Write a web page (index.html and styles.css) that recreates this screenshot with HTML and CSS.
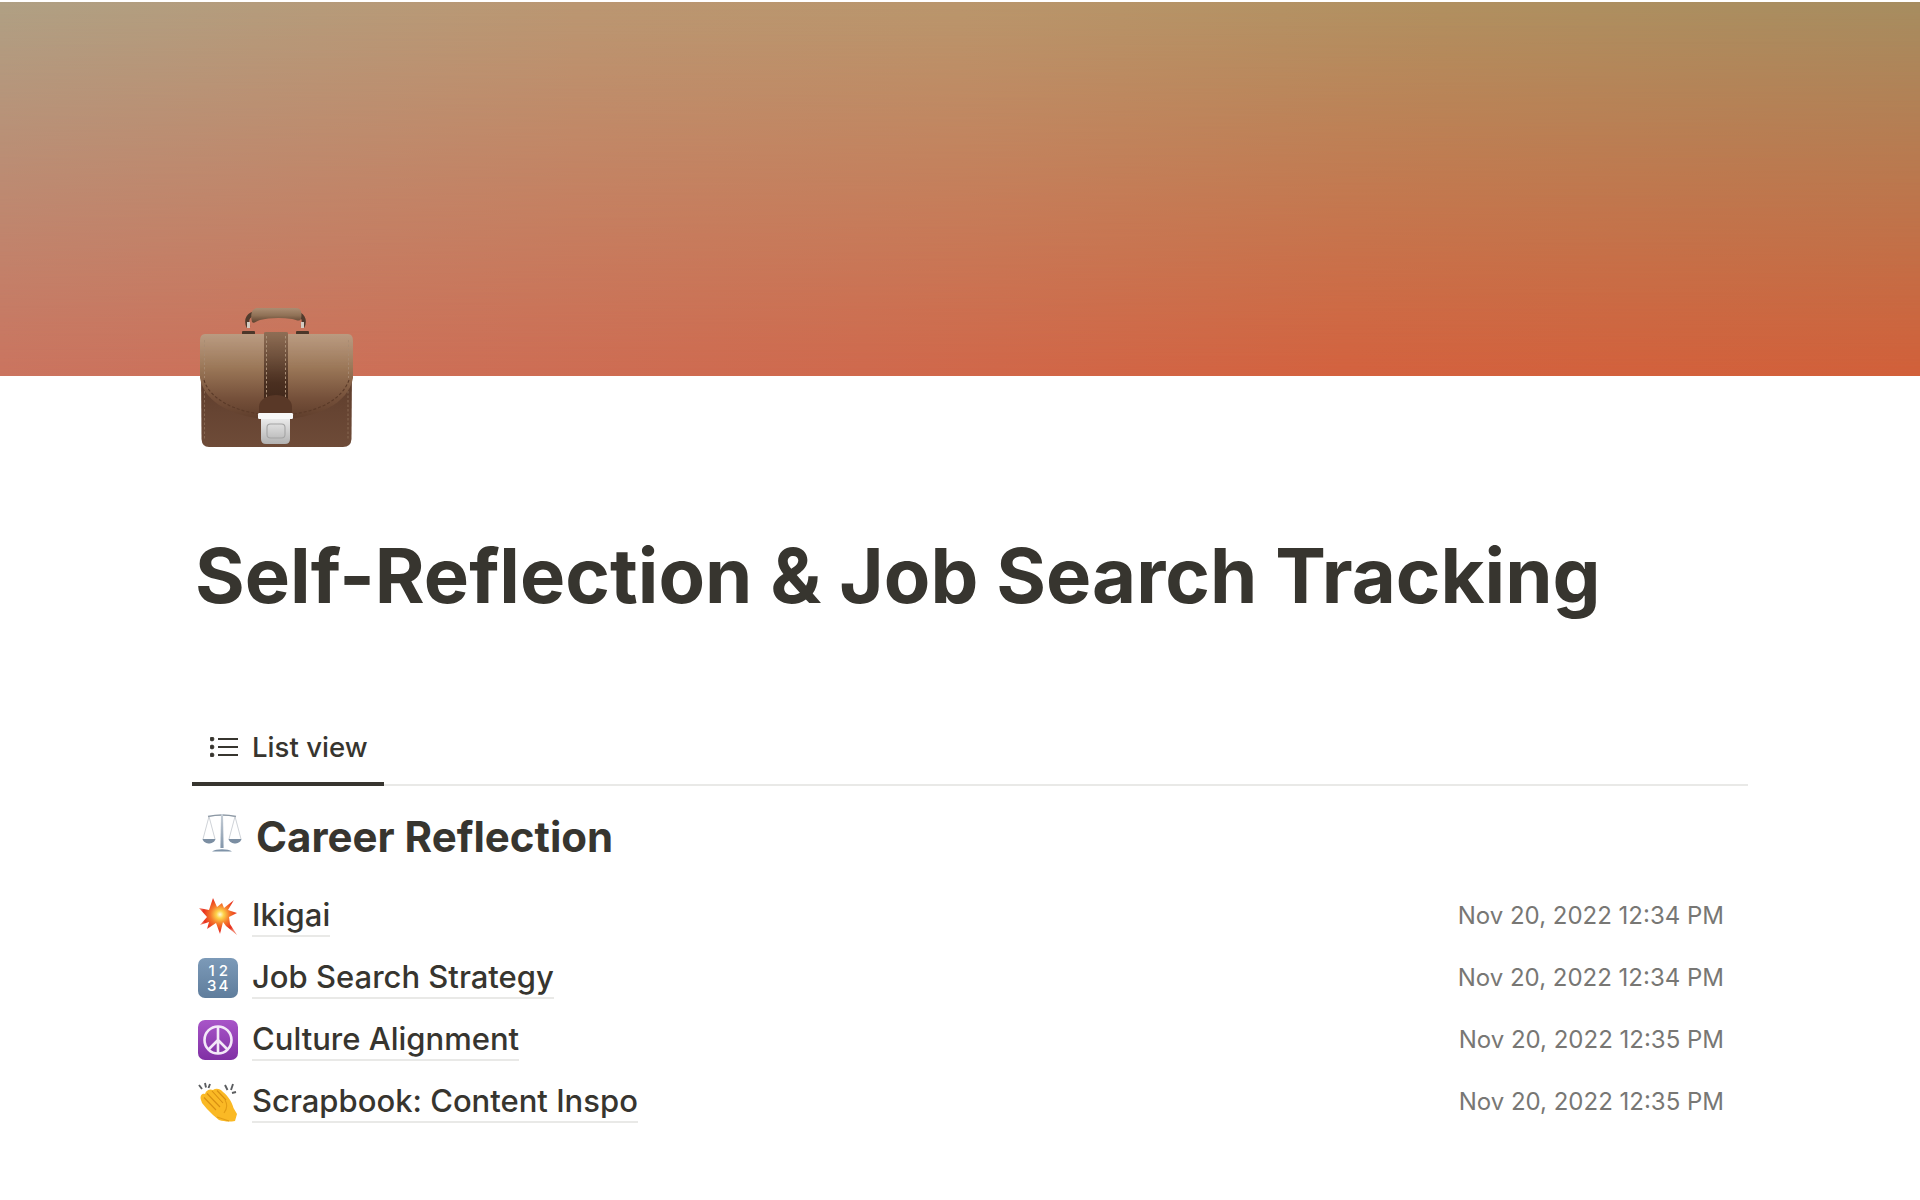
FILE: index.html
```html
<!DOCTYPE html>
<html lang="en">
<head>
<meta charset="utf-8">
<title>Self-Reflection &amp; Job Search Tracking</title>
<link rel="stylesheet" href="styles.css">
</head>
<body>
<div class="cover"></div>
<main class="page">
  <svg class="page-icon" viewBox="0 0 160 150" width="160" height="150" aria-hidden="true">
    <defs>
      <linearGradient id="flap" x1="0" y1="0" x2="0" y2="1"><stop offset="0" stop-color="#bb9b82"/><stop offset=".4" stop-color="#9a7657"/><stop offset=".75" stop-color="#75503a"/><stop offset="1" stop-color="#5e3d2b"/></linearGradient>
      <linearGradient id="base" x1="0" y1="0" x2="0" y2="1"><stop offset="0" stop-color="#5d3c2b"/><stop offset="1" stop-color="#6e4b38"/></linearGradient>
      <linearGradient id="strap" x1="0" y1="0" x2="0" y2="1"><stop offset="0" stop-color="#8a6850"/><stop offset=".7" stop-color="#4a2f20"/><stop offset="1" stop-color="#3f271a"/></linearGradient>
      <linearGradient id="handle" x1="0" y1="0" x2="0" y2="1"><stop offset="0" stop-color="#a98a70"/><stop offset=".5" stop-color="#8a6a50"/><stop offset="1" stop-color="#4f3222"/></linearGradient>
      <linearGradient id="metal" x1="0" y1="0" x2="0" y2="1"><stop offset="0" stop-color="#eeeeee"/><stop offset="1" stop-color="#b2b2b2"/></linearGradient>
    </defs>
    <path d="M52.5 27 C49 19 53 14 60 13 M106.5 27 C110 19 106 14 99 13" fill="none" stroke="#3f2a1f" stroke-width="4"/>
    <path d="M56 22 C54 14 56 8 62 8 H100 C106 8 106 14 105 19 C103 22 101 20 96 19 C84 17 72 18 64 20 C60 21 58 24 56 22 Z" fill="url(#handle)"/>
    <rect x="51" y="22" width="3" height="6" fill="#d8d4ce"/><rect x="105" y="22" width="3" height="6" fill="#d8d4ce"/>
    <rect x="46" y="31" width="13" height="3.5" rx="1" fill="#3f2a1f"/>
    <rect x="100" y="31" width="13" height="3.5" rx="1" fill="#3f2a1f"/>
    <path d="M5 70 H156 L155.5 139 Q155 147 147 147 H13 Q6 147 5.5 139 Z" fill="url(#base)"/>
    <path d="M152 82 V140 M8.5 82 V140" fill="none" stroke="#8a6b56" stroke-width=".9" stroke-dasharray="2.5 2"/>
    <path d="M9 34 H152 Q157 34 157 41 V78 C152 104 122 118 80 120 C38 118 9 104 4 78 V41 Q4 34 9 34 Z" fill="url(#flap)"/>
    <path d="M152.5 40 V78 M8.5 40 V78" fill="none" stroke="#a78a72" stroke-width=".9" stroke-dasharray="2.5 2"/>
    <path d="M8 80 C14 100 40 111 64 114 M153 80 C146 100 122 111 97 114" fill="none" stroke="#5a3a28" stroke-width="1.1" stroke-dasharray="3 2"/>
    <path d="M68 33 Q68 32 70 32 H90 Q92 32 92 33 V105 H68 Z" fill="url(#strap)"/>
    <path d="M70.5 36 V98 M89.5 36 V98" stroke="#a98e76" stroke-width="1" stroke-dasharray="2.5 2"/>
    <path d="M63 116 V107 C63 99 72 95 80 95 C88 95 96 99 96 107 V116 Z" fill="#593827"/>
    <path d="M65 117 H94 V139 Q94 144 89 144 H70 Q65 144 65 139 Z" fill="url(#metal)"/>
    <rect x="62" y="113" width="35" height="6" rx="1.2" fill="#f8f8f8"/>
    <rect x="71" y="124" width="18" height="14" rx="3.5" fill="none" stroke="#a4a4a4" stroke-width="1.1"/>
  </svg>
  <h1 class="title">Self-Reflection &amp; Job Search Tracking</h1>
  <nav class="tabs">
    <div class="tab">
      <svg class="tab-icon" viewBox="0 0 28 20" width="28" height="20" aria-hidden="true">
        <circle cx="2" cy="2" r="1.9"/><circle cx="2" cy="10" r="1.9"/><circle cx="2" cy="18" r="1.9"/>
        <path d="M8 2 H28 M8 10 H28 M8 18 H28" fill="none" stroke-width="2.1"/>
      </svg>
      <span>List view</span>
    </div>
  </nav>
  <h2 class="heading">
    <svg class="heading-icon" viewBox="0 0 40 40" width="40" height="40" aria-hidden="true">
      <defs><linearGradient id="steel" x1="0" y1="0" x2="0" y2="1"><stop offset="0" stop-color="#c8d0d8"/><stop offset="1" stop-color="#8396aa"/></linearGradient></defs>
      <path d="M6 3.5 Q20 .5 34 3.5" fill="none" stroke="#8c98a4" stroke-width="1.3"/>
      <path d="M7 3.5 L1 26 M7 3.5 L13 26 M33 3.5 L27 26 M33 3.5 L39 26" fill="none" stroke="#aeb6be" stroke-width=".6"/>
      <path d="M19 1 H21 L21.6 35 H18.4 Z" fill="url(#steel)"/>
      <path d="M.5 26 H13.5 C12.5 29.5 9 30.5 7 30.5 C5 30.5 1.5 29.5 .5 26 Z" fill="#7b8ea2"/>
      <path d="M26.5 26 H39.5 C38.5 29.5 35 30.5 33 30.5 C31 30.5 27.5 29.5 26.5 26 Z" fill="#7b8ea2"/>
      <path d="M10 38.5 C14 35.5 26 35.5 30 38.5 Z" fill="#7f93a8"/>
    </svg>
    <span>Career Reflection</span>
  </h2>
  <ul class="rows">
    <li class="row">
      <svg class="row-icon" viewBox="0 0 40 40" width="40" height="40" aria-hidden="true">
        <defs><radialGradient id="burst" gradientUnits="userSpaceOnUse" cx="22" cy="18.5" r="21"><stop offset="0" stop-color="#fffbe0"/><stop offset=".18" stop-color="#fdd34a"/><stop offset=".45" stop-color="#f57a2c"/><stop offset=".8" stop-color="#e8301f"/><stop offset="1" stop-color="#f2836e"/></radialGradient></defs>
        <path d="M15 2 L19 11 L24 7 L26 12 L36 4 L30 14 L39 17 L31 21 L32 28 L39 39 L28 30 L25 26 L22 38 L18 27 L9 33 L11 26 L2 29 L9 21 L1 12 L11 14 Z" fill="url(#burst)"/>
      </svg>
      <span class="row-title">Ikigai</span>
      <span class="row-date">Nov 20, 2022 12:34 PM</span>
    </li>
    <li class="row">
      <svg class="row-icon" viewBox="0 0 40 40" width="40" height="40" aria-hidden="true">
        <defs><linearGradient id="slate" x1="0" y1="0" x2="0" y2="1"><stop offset="0" stop-color="#7c9ab8"/><stop offset="1" stop-color="#5f7d9c"/></linearGradient></defs>
        <rect x="0" y="0" width="40" height="40" rx="7" fill="url(#slate)"/>
        <text class="num-text" x="13.7 25.3 13.7 25.3" y="18 18 33 33">1234</text>
      </svg>
      <span class="row-title">Job Search Strategy</span>
      <span class="row-date">Nov 20, 2022 12:34 PM</span>
    </li>
    <li class="row">
      <svg class="row-icon" viewBox="0 0 40 40" width="40" height="40" aria-hidden="true">
        <defs><linearGradient id="violet" x1="0" y1="0" x2="0" y2="1"><stop offset="0" stop-color="#a855c8"/><stop offset="1" stop-color="#8030a4"/></linearGradient></defs>
        <rect x="0" y="0" width="40" height="40" rx="7" fill="url(#violet)"/>
        <circle cx="20" cy="20" r="13.5" fill="none" stroke="#f3e8f8" stroke-width="2.6"/>
        <path d="M20 6.5 V33.5 M20 20 L10.5 29.5 M20 20 L29.5 29.5" fill="none" stroke="#f3e8f8" stroke-width="2.6"/>
      </svg>
      <span class="row-title">Culture Alignment</span>
      <span class="row-date">Nov 20, 2022 12:35 PM</span>
    </li>
    <li class="row">
      <svg class="row-icon" viewBox="0 0 40 40" width="40" height="40" aria-hidden="true">
        <path d="M3 18 C1.500 14 4 11 7 12 C8 8 12 6.500 15 8 C18 6 22 6.500 25 10 C30 14 34 20 35.500 26 L39 32 L37 39 C31 40 26 39.500 21 38 C17 35 13 31 9 27 L4 21 Z" fill="#fab925"/>
        <path d="M6 15.500 L18 28 M9 11.500 L22 25 M14 9 L25 21 M19 8.500 L28 18" stroke="#d88f12" stroke-width="1.100" fill="none"/>
        <path d="M27 18 C29.500 22 29 27 26 31 M19 35 L31 39" stroke="#e29c14" stroke-width="1.100" fill="none"/>
        <path d="M1 3 L4 7 M7 1 L8 5.500 M12 2 L10.500 6 M27 3 L29.500 8 M35 2 L33 8 M38 10 L34 11" stroke="#5b5d60" stroke-width="1.900" fill="none"/>
      </svg>
      <span class="row-title">Scrapbook: Content Inspo</span>
      <span class="row-date">Nov 20, 2022 12:35 PM</span>
    </li>
  </ul>
</main>
</body>
</html>
```
FILE: styles.css
```css
* { box-sizing: border-box; }
html, body { margin: 0; padding: 0; background: #fff; }
body {
  font-family: Inter, "Liberation Sans", sans-serif;
  color: #37352f;
  height: 1200px;
  overflow: hidden;
  padding-top: 2px;
}
.cover {
  height: 374px;
  background: linear-gradient(90deg, #cb745f 0%, #d0694d 45%, #d4623f 70%, #d2603a 100%);
}
.cover::before {
  content: "";
  display: block;
  height: 100%;
  background: linear-gradient(90deg, #afa084 0%, #ba9772 30%, #b9966c 50%, #b09060 75%, #a68d60 100%);
  -webkit-mask-image: linear-gradient(180deg, #000, transparent);
  mask-image: linear-gradient(180deg, #000, transparent);
}
.page {
  width: 1556px;
  margin-left: 192px;
}
.page-icon {
  display: block;
  margin: -76px 0 0 4px;
}
.title {
  margin: 80px 0 0 3px;
  font-size: 76px;
  font-weight: 700;
  line-height: 1.2;
  white-space: nowrap;
}
.tabs {
  margin-top: 92px;
  border-bottom: 2px solid #e9e9e7;
  height: 73px;
}
.tab {
  width: 192px;
  height: 73px;
  border-bottom: 4px solid #37352f;
  display: flex;
  align-items: center;
  gap: 14px;
  padding: 0 0 2px 18px;
  font-size: 27.6px;
  font-weight: 500;
}
.tab-icon { fill: #37352f; stroke: #37352f; }
.heading {
  display: flex;
  align-items: center;
  gap: 14px;
  margin: 26px 0 0 10px;
  font-size: 42px;
  font-weight: 700;
  line-height: 50px;
}
.heading-icon { margin-bottom: 8px; }
.rows {
  list-style: none;
  margin: 23px 0 0;
  padding: 0;
}
.row {
  height: 62px;
  display: flex;
  align-items: center;
  padding-left: 6px;
}
.row-icon { flex: none; margin-right: 14px; }
.row-title {
  font-size: 31px;
  font-weight: 500;
  border-bottom: 2px solid #e9e9e7;
  line-height: 40px;
}
.row-date {
  margin-left: auto;
  padding-right: 24px;
  font-size: 24px;
  color: #787774;
  line-height: 28px;
  margin-bottom: 1px;
}
.num-text {
  fill: #fff;
  font-family: Inter, "Liberation Sans", sans-serif;
  font-size: 15px;
  font-weight: 500;
  text-anchor: middle;
}
```
